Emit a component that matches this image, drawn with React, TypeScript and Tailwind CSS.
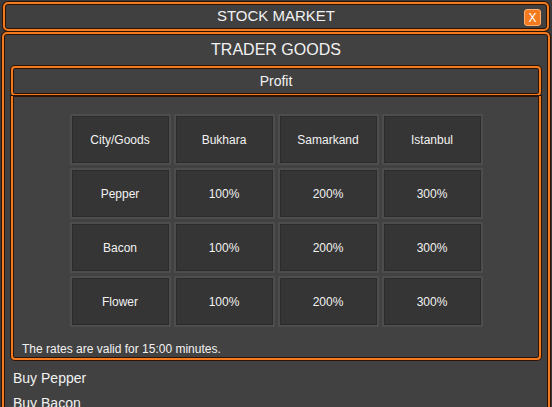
import React from 'react'

const cities = ['Bukhara', 'Samarkand', 'Istanbul']
const goods = ['Pepper', 'Bacon', 'Flower']
const rates = ['100%', '200%', '300%']

const frame =
  'border-2 border-[#f47a1f] shadow-[0_0_0_1px_#2b1405,inset_0_0_0_1px_#2b1405]'

function Cell({ children }: { children: React.ReactNode }) {
  return (
    <div className="h-[47px] flex items-center justify-center bg-[#353535] border border-[#2c2c2c] shadow-[0_0_0_2px_#4d4d4d] text-[12px] text-[#f2f2f2]">
      {children}
    </div>
  )
}

export default function App() {
  return (
    <div
      className="w-[552px] h-[407px] overflow-hidden bg-[#3b3b3b] pt-[2px] px-[2px] flex flex-col"
      style={{ fontFamily: '"Liberation Sans", Arial, sans-serif' }}
    >
      {/* title bar */}
      <div className={`h-[29px] shrink-0 mx-[1px] rounded-[5px] bg-[#404040] relative flex items-center justify-center ${frame}`}>
        <span className="text-[15px] text-[#f2f2f2]">STOCK MARKET</span>
        <button className="absolute right-[6px] top-[5px] w-[17px] h-[17px] rounded-[3px] bg-[#f47a1f] border border-[#ffb070] text-white text-[12px] leading-none flex items-center justify-center">
          X
        </button>
      </div>

      {/* content panel */}
      <div className={`flex-1 mt-[1px] rounded-t-[5px] border-b-0 bg-[#414141] ${frame}`}>
        <div className="h-[32px] flex items-center justify-center text-[16px] text-[#f2f2f2]">
          TRADER GOODS
        </div>

        <div className={`mx-[7px] h-[30px] rounded-[4px] bg-[#414141] flex items-center justify-center text-[14px] text-[#f2f2f2] ${frame}`}>
          Profit
        </div>

        <div className={`mx-[7px] h-[264px] rounded-b-[4px] border-t-0 bg-[#424242] flex flex-col ${frame}`}>
          <div className="mx-auto mt-[20px] grid grid-cols-[97px_97px_97px_97px] gap-[7px]">
            <Cell>City/Goods</Cell>
            {cities.map(c => (
              <Cell key={c}>{c}</Cell>
            ))}
            {goods.map(g => (
              <React.Fragment key={g}>
                <Cell>{g}</Cell>
                {rates.map(r => (
                  <Cell key={r}>{r}</Cell>
                ))}
              </React.Fragment>
            ))}
          </div>
          <p className="mt-[15px] ml-[9px] text-[12px] text-[#f2f2f2]">
            The rates are valid for 15:00 minutes.
          </p>
        </div>

        <div className="mt-[6px] ml-[9px] text-[14px] leading-[25px] text-[#f2f2f2]">
          <div>Buy Pepper</div>
          <div>Buy Bacon</div>
        </div>
      </div>
    </div>
  )
}
